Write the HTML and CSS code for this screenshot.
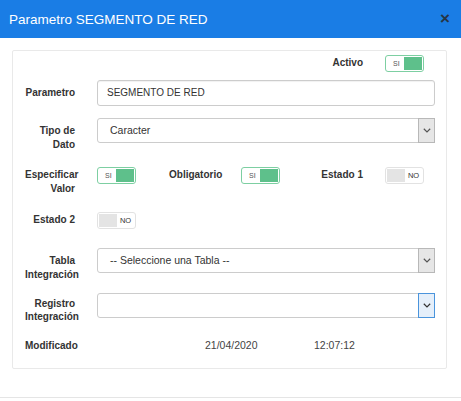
FILE: index.html
```html
<!DOCTYPE html>
<html lang="es">
<head>
<meta charset="utf-8">
<title>Parametro SEGMENTO DE RED</title>
<link rel="stylesheet" href="styles.css">
</head>
<body>
<div class="modal">
  <div class="header">
    <span class="title">Parametro SEGMENTO DE RED</span>
    <span class="close">&times;</span>
  </div>
  <div class="body">
    <div class="panel">
      <div class="grid3 row-activo">
        <div></div><div></div>
        <div class="group">
          <span class="lbl lbl-one">Activo</span>
          <span class="toggle on"><span class="t-side">SI</span><span class="knob"></span></span>
        </div>
      </div>

      <div class="field row-param">
        <span class="lbl lbl-input">Parametro</span>
        <div class="input">SEGMENTO DE RED</div>
      </div>

      <div class="field row-tipo">
        <span class="lbl lbl-select">Tipo de<br>Dato</span>
        <div class="select"><span class="sel-text">Caracter</span><span class="arrow"><svg width="8" height="5" viewBox="0 0 8 5"><polyline points="0.8,0.8 4,3.9 7.2,0.8" fill="none" stroke="#555" stroke-width="1.2"/></svg></span></div>
      </div>

      <div class="grid3 row-toggles">
        <div class="group">
          <span class="lbl lbl-one">Especificar Valor</span>
          <span class="toggle on"><span class="t-side">SI</span><span class="knob"></span></span>
        </div>
        <div class="group">
          <span class="lbl lbl-one">Obligatorio</span>
          <span class="toggle on"><span class="t-side">SI</span><span class="knob"></span></span>
        </div>
        <div class="group">
          <span class="lbl lbl-one">Estado 1</span>
          <span class="toggle off"><span class="knob"></span><span class="t-side">NO</span></span>
        </div>
      </div>

      <div class="grid3 row-estado2">
        <div class="group">
          <span class="lbl lbl-one">Estado 2</span>
          <span class="toggle off"><span class="knob"></span><span class="t-side">NO</span></span>
        </div>
      </div>

      <div class="field row-tabla">
        <span class="lbl lbl-select">Tabla Integración</span>
        <div class="select"><span class="sel-text">-- Seleccione una Tabla --</span><span class="arrow"><svg width="8" height="5" viewBox="0 0 8 5"><polyline points="0.8,0.8 4,3.9 7.2,0.8" fill="none" stroke="#555" stroke-width="1.2"/></svg></span></div>
      </div>

      <div class="field row-registro">
        <span class="lbl lbl-select lbl-reg">Registro Integración</span>
        <div class="select"><span class="sel-text"></span><span class="arrow focus"><svg width="8" height="5" viewBox="0 0 8 5"><polyline points="0.8,0.8 4,3.9 7.2,0.8" fill="none" stroke="#333" stroke-width="1.2"/></svg></span></div>
      </div>

      <div class="row-mod">
        <span class="lbl mod-lbl">Modificado</span>
        <span class="mod-date">21/04/2020</span>
        <span class="mod-time">12:07:12</span>
      </div>
    </div>
  </div>
  <div class="footer"></div>
</div>
</body>
</html>
```

FILE: styles.css
```css
* { box-sizing: border-box; }
html, body { margin: 0; padding: 0; background: #fff; }
body {
  font-family: "Liberation Sans", Arial, sans-serif;
  color: #333;
  width: 461px;
  height: 401px;
  overflow: hidden;
}
.header {
  height: 38px;
  background: #1a7de5;
  display: flex;
  align-items: center;
  justify-content: space-between;
  padding: 0 11px 0 9px;
}
.title {
  color: #fff;
  font-size: 13.5px;
  line-height: 16px;
  padding-top: 2px;
}
.close {
  color: #263544;
  font-weight: bold;
  font-size: 17px;
  line-height: 16px;
}
.body {
  padding: 12px 14px 28px 12px;
}
.panel {
  border: 1px solid #e9e9e9;
  border-radius: 2px;
  padding: 4px 11px 15px 12px;
}
.lbl {
  font-size: 10px;
  font-weight: bold;
  line-height: 13.5px;
  color: #333;
  width: 50px;
  flex: 0 0 50px;
  margin-right: 22px;
  text-align: right;
}
.lbl-one { padding-top: 1px; }
.lbl-input { padding-top: 6px; }
.lbl-select { padding-top: 6px; }
.lbl-select.lbl-reg { padding-top: 4px; line-height: 13px; }

.field { display: flex; align-items: flex-start; }
.grid3 {
  display: grid;
  grid-template-columns: 144px 144px 1fr;
}
.group { display: flex; align-items: flex-start; }

.row-param { margin-top: 8px; }
.row-tipo { margin-top: 12px; }
.row-toggles { margin-top: 16px; }
.row-estado2 { margin-top: 17px; }
.row-tabla { margin-top: 19px; }
.row-registro { margin-top: 12px; }
.row-mod { margin-top: 16px; display: flex; }

.input {
  flex: 1;
  height: 26px;
  border: 1px solid #ccc;
  border-radius: 3px;
  box-shadow: inset 0 1px 1px rgba(0,0,0,0.06);
  font-size: 10px;
  line-height: 24px;
  padding-left: 9px;
  color: #333;
}
.select {
  flex: 1;
  height: 25px;
  border: 1px solid #ccc;
  border-radius: 3px;
  display: flex;
  align-items: stretch;
  font-size: 10.5px;
  color: #333;
}
.sel-text {
  flex: 1;
  line-height: 23px;
  padding-left: 12px;
}
.arrow {
  width: 17px;
  border: 1px solid #b8b8b8;
  background: #e6e6e6;
  display: flex;
  align-items: center;
  justify-content: center;
  margin: -1px -1px -1px 0;
}
.arrow.focus {
  border-color: #4a94dc;
  background: #e5effa;
}

.toggle {
  width: 39px;
  height: 17px;
  border: 1px solid #7dcfa2;
  border-radius: 3px;
  display: flex;
  padding: 1px;
  background: #fff;
}
.toggle .t-side {
  flex: 1;
  font-size: 7px;
  line-height: 13px;
  color: #555;
}
.toggle.on .t-side { padding-left: 6px; }
.toggle .knob {
  width: 18px;
  background: #5ec08b;
}
.toggle.off {
  border-color: #e2e2e2;
}
.toggle.off .knob {
  background: #e4e4e4;
}
.toggle.off .t-side {
  text-align: center;
  font-size: 7.5px;
  color: #333;
}

.mod-lbl { padding-top: 0; text-align: left; margin-right: 0; width: 180px; flex: 0 0 180px; }
.mod-date, .mod-time {
  font-size: 10.5px;
  line-height: 13.5px;
  color: #444;
}
.mod-date { width: 109px; }

.footer {
  border-top: 1px solid #e5e5e5;
  height: 10px;
}
```
